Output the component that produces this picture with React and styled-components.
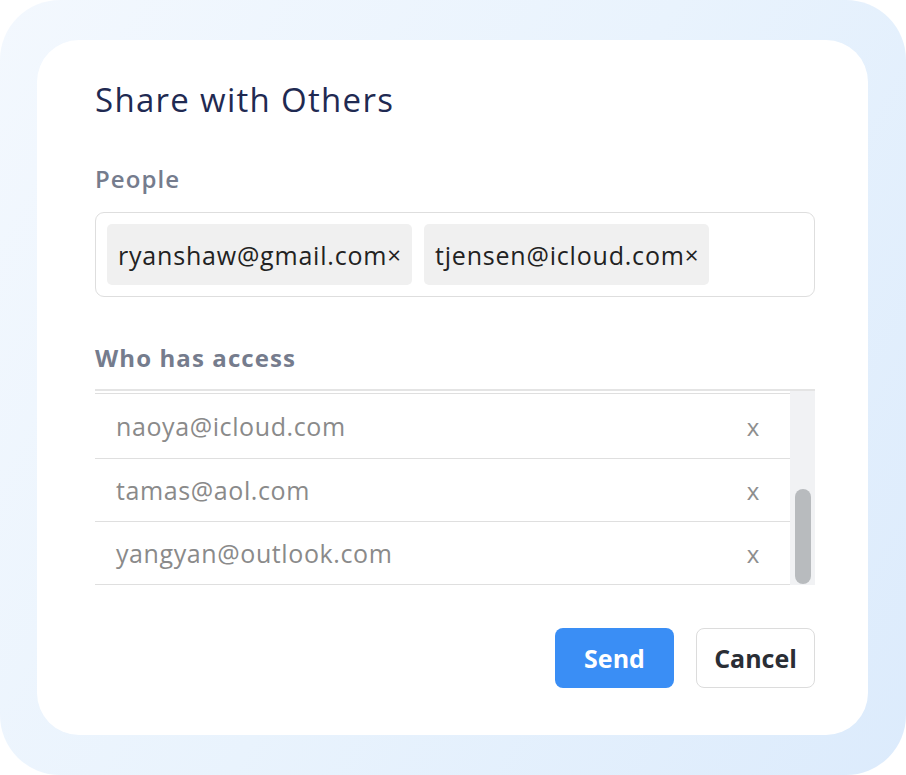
import React from 'react';
import styled, { createGlobalStyle } from 'styled-components';

const Global = createGlobalStyle`
    html, body {
        margin: 0;
        padding: 0;
        background: #ffffff;
    }
    body {
        font-family: "Open Sans", "Lato", sans-serif;
    }
`;

const Frame = styled.div`
    width: 906px;
    height: 775px;
    box-sizing: border-box;
    padding: 40px 38px 40px 37px;
    border-radius: 60px;
    background: linear-gradient(120deg, #f3f8fe 0%, #e9f3fd 50%, #dcebfc 100%);
    display: flex;
`;

const Card = styled.div`
    flex: 1;
    background: #ffffff;
    border-radius: 42px;
    padding: 40px 53px 0 58px;
    display: flex;
    flex-direction: column;
`;

const Title = styled.h1`
    margin: 0;
    font-size: 33px;
    font-weight: 400;
    color: #1f2a52;
    line-height: 40px;
    letter-spacing: 1.3px;
`;

const Label = styled.div`
    margin-top: ${ (p) => p.top }px;
    font-size: 24px;
    font-weight: ${ (p) => p.bold ? 700 : 600 };
    color: #757c8d;
    line-height: 32px;
    letter-spacing: 1.1px;
`;

const ChipBox = styled.div`
    margin-top: 17px;
    height: 85px;
    box-sizing: border-box;
    border: 1.5px solid #dedede;
    border-radius: 9px;
    padding: 11px;
    display: flex;
    gap: 12px;
`;

const Chip = styled.div`
    background: #f0f0f0;
    border-radius: 5px;
    padding: 0 11px;
    display: flex;
    align-items: center;
    font-size: 25px;
    color: #222222;
    letter-spacing: 0.8px;
`;

const Remove = styled.span`
    font-size: 24px;
    margin-left: 0;
    letter-spacing: 0;
`;

const List = styled.div`
    margin-top: 15px;
    display: flex;
    border-top: 2px solid #e4e4e4;
`;

const Rows = styled.div`
    flex: 1;
    padding-top: 2px;
`;

const Row = styled.div`
    height: ${ (p) => p.h }px;
    box-sizing: border-box;
    border-top: 1.5px solid #dfdfdf;
    border-bottom: ${ (p) => p.last ? '1.5px solid #dfdfdf' : 'none' };
    display: flex;
    align-items: center;
    justify-content: space-between;
    padding: 0 30px 0 21px;
    font-size: 25px;
    color: #8a8a8a;
    letter-spacing: 0.6px;
`;

const RowX = styled.span`
    font-size: 24px;
    color: #8e8e8e;
`;

const Track = styled.div`
    width: 25px;
    background: #f1f2f4;
    display: flex;
    flex-direction: column;
    justify-content: flex-end;
    align-items: center;
    padding-bottom: 1px;
`;

const Thumb = styled.div`
    width: 16px;
    height: 95px;
    border-radius: 8px;
    background: #b8bbbe;
`;

const Actions = styled.div`
    margin-top: 43px;
    display: flex;
    justify-content: flex-end;
    gap: 22px;
`;

const Button = styled.button`
    width: 119px;
    height: 60px;
    border-radius: 8px;
    font-family: "Open Sans", "Lato", sans-serif;
    font-size: 25px;
    font-weight: 700;
    cursor: pointer;
    background: ${ (p) => p.primary ? '#3a8ef5' : '#ffffff' };
    color: ${ (p) => p.primary ? '#ffffff' : '#2a2e35' };
    border: ${ (p) => p.primary ? 'none' : '1.5px solid #dcdcdc' };
`;

const people = [ 'ryanshaw@gmail.com', 'tjensen@icloud.com' ];
const access = [
    { email: 'naoya@icloud.com', h: 65 },
    { email: 'tamas@aol.com', h: 63 },
    { email: 'yangyan@outlook.com', h: 64 },
];

export default function App() {
    return (
        <>
            <Global/>
            <Frame>
                <Card>
                    <Title>Share with Others</Title>
                    <Label top={ 43 }>People</Label>
                    <ChipBox>
                        { people.map( (p) =>
                            <Chip key={ p }>{ p }<Remove>×</Remove></Chip>
                        ) }
                    </ChipBox>
                    <Label top={ 45 } bold>Who has access</Label>
                    <List>
                        <Rows>
                            { access.map( (a, i) =>
                                <Row key={ a.email } h={ a.h } last={ i === access.length - 1 }>
                                    <span>{ a.email }</span>
                                    <RowX>x</RowX>
                                </Row>
                            ) }
                        </Rows>
                        <Track><Thumb/></Track>
                    </List>
                    <Actions>
                        <Button primary>Send</Button>
                        <Button>Cancel</Button>
                    </Actions>
                </Card>
            </Frame>
        </>
    );
}
